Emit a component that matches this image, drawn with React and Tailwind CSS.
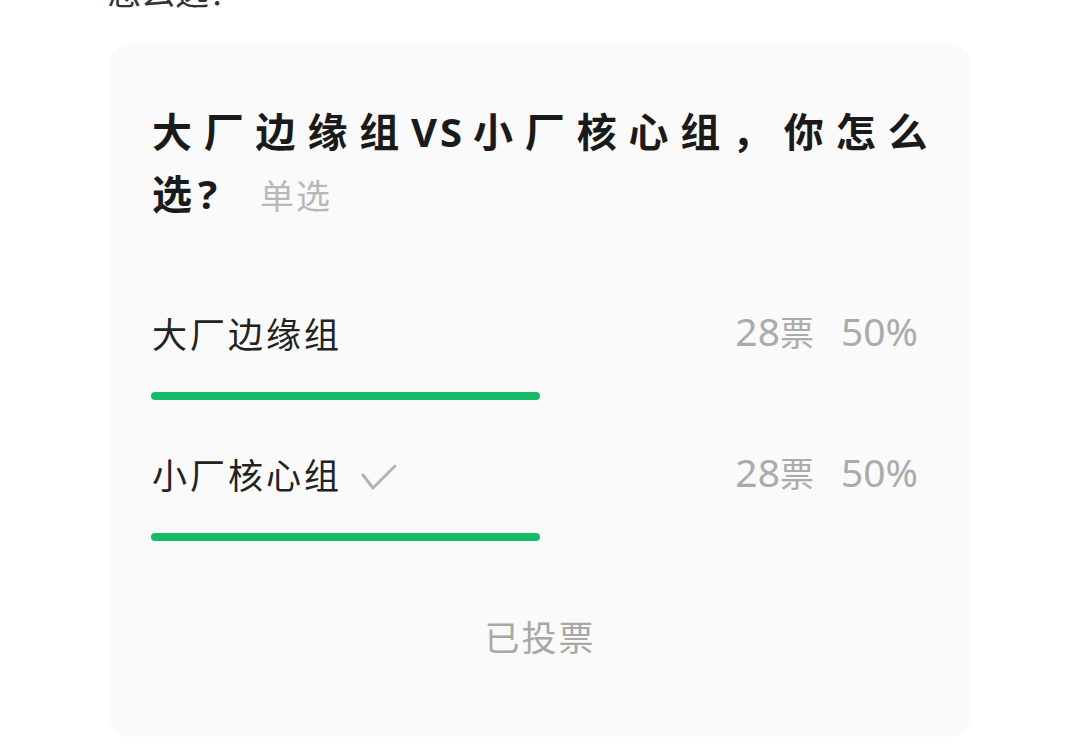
import React from 'react';

const font = { fontFamily: '"Noto Sans", "Noto Sans CJK SC", sans-serif' };

const options = [
  { id: 1, label: '大厂边缘组', votes: 28, pct: 50, mine: false },
  { id: 2, label: '小厂核心组', votes: 28, pct: 50, mine: true },
];

const Check = () => (
  <svg width="36" height="26" viewBox="0 0 36 26" fill="none" className="ml-[19px] mt-[2px]">
    <polyline points="2,11 12,24 34,2" stroke="#b3b3b3" strokeWidth="3" strokeLinecap="round" strokeLinejoin="round" />
  </svg>
);

export default function App() {
  return (
    <div className="w-[1080px] h-[755px] bg-white overflow-hidden" style={font}>
      {/* tail of previous paragraph, cut off by the top edge */}
      <div className="h-[45px] overflow-hidden pl-[107px]">
        <div className="-mt-[25px] text-[34px] leading-[34px] text-[#333]">怎么选？</div>
      </div>

      <div className="ml-[110px] w-[860px] h-[691px] rounded-[20px] bg-[#fafafa] shadow-[0_0_3px_rgba(0,0,0,0.04)] px-[41px] pt-[56px]">
        {/* question */}
        <div className="pl-[1px] w-[800px] text-[40px] leading-[62px] font-bold tracking-[11.8px] text-[#1a1a1a]">
          大厂边缘组<span className="tracking-[3px]">VS</span>
          <span className="ml-[8px]">小厂核心组，你怎么</span>
          <span className="tracking-[6px]">选</span>
          <span className="tracking-normal">?</span>
          <span className="ml-[43px] text-[34px] font-normal tracking-[2px] text-[#b8b8b8]">单选</span>
        </div>

        {/* results */}
        <div className="mt-[84px] flex flex-col gap-[52px]">
          {options.map((o) => (
            <div key={o.id} className="flex flex-col">
              <div className="flex items-center justify-between h-[48px] pl-[1px] pr-[11px]">
                <div className="flex items-center">
                  <span className="text-[35px] leading-[48px] tracking-[3px] text-[#222]">{o.label}</span>
                  {o.mine && <Check />}
                </div>
                <div className="flex items-baseline gap-[27px] leading-[48px] text-[#ababab]">
                  <span>
                    <span className="text-[39px]">{o.votes}</span>
                    <span className="text-[34px]">票</span>
                  </span>
                  <span className="text-[39px]">{o.pct}%</span>
                </div>
              </div>
              <div className="mt-[33px] h-[8px]">
                <div className="h-full rounded-full bg-[#17b96a]" style={{ width: `${o.pct}%` }} />
              </div>
            </div>
          ))}
        </div>

        <div className="mt-[73px] text-center text-[35px] leading-[48px] tracking-[2px] text-[#a8a8a8]">已投票</div>
      </div>
    </div>
  );
}
